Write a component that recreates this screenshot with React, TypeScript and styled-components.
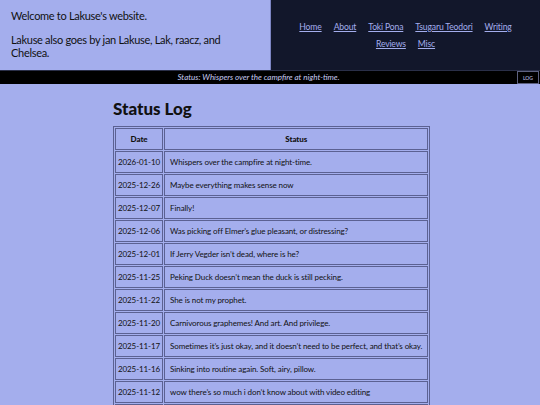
import styled, { createGlobalStyle } from 'styled-components'

const lavender = '#a4aeed'
const navy = '#12172b'
const line = '#5b6192'

const GlobalStyle = createGlobalStyle`
  html, body {
    margin: 0;
    padding: 0;
    background: ${lavender};
    font-family: 'Lato', 'Noto Sans', sans-serif;
    color: #111;
  }
`

const Header = styled.header`
  display: grid;
  grid-template-columns: 271px 1fr;
  height: 70px;
`

const Intro = styled.div`
  background: ${lavender};
  border-right: 1px solid #7d86c4;
  padding: 9px 11px 0;
  font-size: 11px;
  letter-spacing: -0.3px;
  line-height: 13px;

  p {
    margin: 0 0 11px;
  }
`

const Nav = styled.nav`
  background: ${navy};
  display: flex;
  flex-wrap: wrap;
  justify-content: center;
  align-content: center;
  column-gap: 12px;
  row-gap: 4px;
  padding: 1px 22px 0;
`

const NavLink = styled.a`
  color: ${lavender};
  font-size: 8.6px;
  letter-spacing: -0.15px;
  line-height: 13px;
  text-decoration: underline;
  cursor: pointer;
`

const StatusBar = styled.div`
  display: flex;
  align-items: stretch;
  height: 13px;
  background: #000;
  border-top: 1px solid #2a2f48;
`

const StatusText = styled.div`
  flex: 1;
  text-align: center;
  color: #c8cdf3;
  font-style: italic;
  font-size: 8px;
  line-height: 13px;
`

const LogButton = styled.button`
  width: 22px;
  margin-right: 1px;
  padding: 0;
  background: #000;
  color: #c8cdf3;
  border: 1px solid #5d6180;
  font-family: inherit;
  font-size: 5px;
  cursor: pointer;
`

const Main = styled.main`
  width: 314px;
  margin: 0 auto;
  padding-top: 15px;
`

const Title = styled.h1`
  margin: 0 0 7px;
  font-size: 17px;
  line-height: 20px;
  font-weight: 900;
`

const Table = styled.table`
  width: 100%;
  border: 1px solid ${line};
  border-spacing: 1px;
  font-size: 8px;
  letter-spacing: -0.1px;
`

const HeadCell = styled.th`
  border: 1px solid ${line};
  height: 20px;
  padding: 0;
  font-weight: 900;
  width: ${(p: { $narrow?: boolean }) => (p.$narrow ? '45px' : 'auto')};
`

const Cell = styled.td`
  border: 1px solid ${line};
  height: 20px;
  padding: 0 5px;
  text-align: ${(p: { $center?: boolean }) => (p.$center ? 'center' : 'left')};
  white-space: nowrap;
`

const DateCell = styled(Cell)`
  padding: 0 2px;
`

const entries: [string, string][] = [
  ['2026-01-10', 'Whispers over the campfire at night-time.'],
  ['2025-12-26', 'Maybe everything makes sense now'],
  ['2025-12-07', 'Finally!'],
  ['2025-12-06', 'Was picking off Elmer\u2019s glue pleasant, or distressing?'],
  ['2025-12-01', 'If Jerry Vegder isn\u2019t dead, where is he?'],
  ['2025-11-25', 'Peking Duck doesn\u2019t mean the duck is still pecking.'],
  ['2025-11-22', 'She is not my prophet.'],
  ['2025-11-20', 'Carnivorous graphemes! And art. And privilege.'],
  ['2025-11-17', 'Sometimes it\u2019s just okay, and it doesn\u2019t need to be perfect, and that\u2019s okay.'],
  ['2025-11-16', 'Sinking into routine again. Soft, airy, pillow.'],
  ['2025-11-12', 'wow there\u2019s so much i don\u2019t know about with video editing'],
  ['2025-11-10', 'Listening.'],
]

const links = ['Home', 'About', 'Toki Pona', 'Tsugaru Teodori', 'Writing', 'Reviews', 'Misc']

export default function App() {
  return (
    <>
      <GlobalStyle />
      <Header>
        <Intro>
          <p>Welcome to Lakuse's website.</p>
          <p>Lakuse also goes by jan Lakuse, Lak, raacz, and Chelsea.</p>
        </Intro>
        <Nav>
          {links.map((l) => (
            <NavLink key={l}>{l}</NavLink>
          ))}
        </Nav>
      </Header>
      <StatusBar>
        <StatusText>Status: Whispers over the campfire at night-time.</StatusText>
        <LogButton>LOG</LogButton>
      </StatusBar>
      <Main>
        <Title>Status Log</Title>
        <Table>
          <thead>
            <tr>
              <HeadCell $narrow>Date</HeadCell>
              <HeadCell>Status</HeadCell>
            </tr>
          </thead>
          <tbody>
            {entries.map(([d, s]) => (
              <tr key={d}>
                <DateCell $center>{d}</DateCell>
                <Cell>{s}</Cell>
              </tr>
            ))}
          </tbody>
        </Table>
      </Main>
    </>
  )
}
